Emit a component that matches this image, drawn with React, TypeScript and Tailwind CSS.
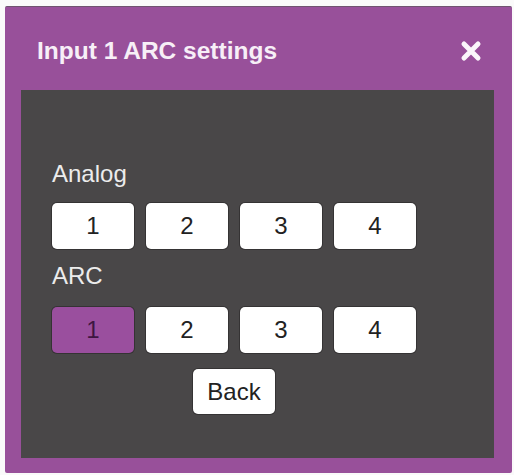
import { useState } from 'react';

interface ChoiceRowProps {
  label: string;
  selected: number | null;
  onSelect: (value: number) => void;
  labelClassName?: string;
  rowClassName?: string;
}

function ChoiceRow({ label, selected, onSelect, labelClassName, rowClassName }: ChoiceRowProps) {
  return (
    <>
      <div className={`text-[24px] leading-[28px] text-[#ececec] ${labelClassName ?? ''}`}>{label}</div>
      <div className={`flex gap-3 ${rowClassName ?? ''}`}>
        {[1, 2, 3, 4].map((n) => (
          <button
            key={n}
            onClick={() => onSelect(n)}
            className={`w-[82px] h-[46px] rounded-[5px] text-[24px] leading-none shadow-[0_0_0_1px_#353334] ${
              selected === n ? 'bg-[#9a4f9e] text-[#3e1641]' : 'bg-white text-[#222]'
            }`}>
            {n}
          </button>
        ))}
      </div>
    </>
  );
}

export default function App() {
  const [analog, setAnalog] = useState<number | null>(null);
  const [arc, setArc] = useState<number | null>(1);

  return (
    <div className="w-[514px] h-[475px] bg-[#fafafa] pl-[5px] pt-[6px] font-['Liberation_Sans',Arial,sans-serif]">
      <div className="w-[507px] h-[467px] bg-[#98509a] rounded-[2px] border-t border-[#6f5470] flex flex-col">
        {/* title bar */}
        <div className="h-[83px] flex items-center justify-between pl-[32px] pr-[30px] pt-[5px]">
          <h1 className="text-[24.5px] font-bold text-[#f7eff7]">Input 1 ARC settings</h1>
          <button aria-label="Close" className="w-[22px] h-[22px]">
            <svg viewBox="0 0 22 22" width="22" height="22">
              <path d="M4 4 L18 18 M18 4 L4 18" stroke="#fbf6fb" strokeWidth="5" strokeLinecap="round" />
            </svg>
          </button>
        </div>

        <div className="ml-[16px] w-[473px] h-[368px] bg-[#494748] pl-[31px]">
          <div className="w-[364px] flex flex-col">
            <ChoiceRow
              label="Analog"
              selected={analog}
              onSelect={setAnalog}
              labelClassName="mt-[70px]"
              rowClassName="mt-[15px]"
            />
            <ChoiceRow
              label="ARC"
              selected={arc}
              onSelect={setArc}
              labelClassName="mt-[13px]"
              rowClassName="mt-[17px]"
            />
            <button className="mt-[16px] self-center w-[82px] h-[45px] rounded-[5px] bg-white text-[24px] leading-none text-[#222] shadow-[0_0_0_1px_#353334]">
              Back
            </button>
          </div>
        </div>
      </div>
    </div>
  );
}
